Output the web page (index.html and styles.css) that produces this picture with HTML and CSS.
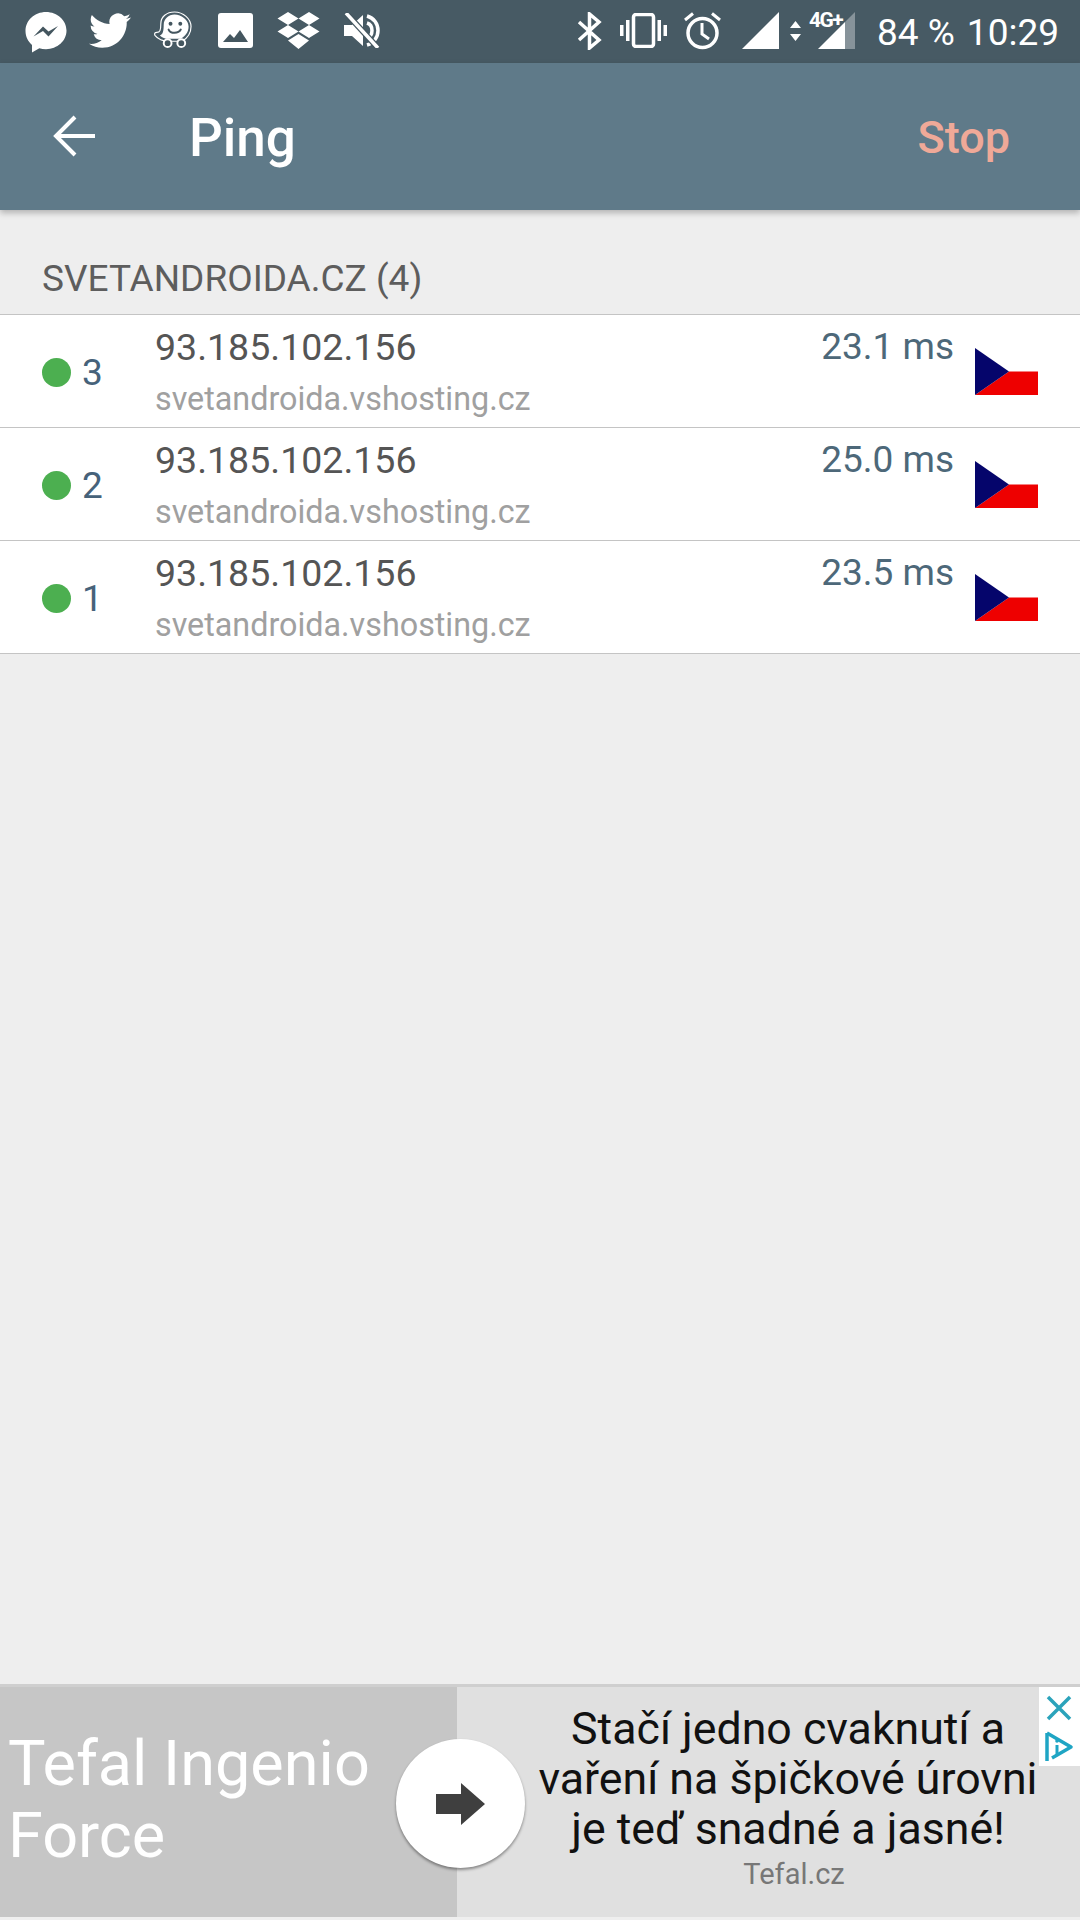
FILE: index.html
```html
<!DOCTYPE html>
<html lang="cs">
<head>
<meta charset="utf-8">
<title>Ping</title>
<link rel="stylesheet" href="styles.css">
</head>
<body>
<div class="page">
  <header class="status">
    <div class="status-left">
      <svg class="ic ic-messenger" viewBox="0 0 42 42"><path fill="#fff" d="M21 1C9.6 1 .5 9.3.5 20c0 5.6 2.5 10.500 6.500 14v7.500l7.300-4.200c2.100.6 4.400.9 6.700.9 11.400 0 20.500-8.300 20.500-18.600S32.400 1 21 1z"/><path fill="#44565f" d="M8.500 25.500 18 15.500l5.500 5 9.500-5.500-9.500 10.500-5.500-5.500z"/></svg>
      <svg class="ic ic-twitter" viewBox="0 0 24 20.500"><path fill="#fff" d="M23.950 2.570a10 10 0 0 1-2.820.78 4.960 4.960 0 0 0 2.160-2.730c-.95.560-2 .96-3.130 1.190A4.920 4.920 0 0 0 11.780 6.290C7.690 6.100 4.070 4.130 1.640 1.160a4.820 4.820 0 0 0-.67 2.480c0 1.710.87 3.210 2.190 4.090a4.900 4.900 0 0 1-2.230-.61v.06a4.920 4.920 0 0 0 3.950 4.820 5 5 0 0 1-2.210.09 4.940 4.940 0 0 0 4.600 3.420 9.870 9.870 0 0 1-6.100 2.100c-.39 0-.78-.02-1.170-.07a14 14 0 0 0 7.560 2.210c9.050 0 14-7.500 14-13.980 0-.21 0-.42-.02-.63A9.940 9.940 0 0 0 24 2.590z"/></svg>
      <svg class="ic ic-waze" viewBox="0 0 42 40"><path fill="none" stroke="#fff" stroke-width="1.200" d="M9 13C9 6 15 1 23 1c9 0 17 7 17 15 0 7-4 12-9 15H17c-5 0-10-1-14-6-1-2 0-3 2-3 3 0 4-2 4-9z"/><path fill="#fff" d="M12 14c0-6 5-10.500 11-10.500 7.500 0 14.500 6 14.500 12.500 0 6-3.500 10-8 12.500H17c-3.500 0-6.500-1-9-3.500 3-1 4-4 4-11.500z"/><circle cx="19" cy="13" r="2" fill="#44565f"/><circle cx="29" cy="13" r="2" fill="#44565f"/><path fill="none" stroke="#44565f" stroke-width="2" stroke-linecap="round" d="M17 19c2 4.500 10 4.500 12.500 0"/><circle cx="16" cy="33" r="4" fill="#44565f" stroke="#fff" stroke-width="2"/><circle cx="30" cy="33" r="4" fill="#44565f" stroke="#fff" stroke-width="2"/></svg>
      <svg class="ic ic-image" viewBox="0 0 35 35"><rect width="35" height="35" rx="3" fill="#fff"/><path fill="#44565f" d="M5 29l7-8 4 4 6-8 8 12z"/></svg>
      <svg class="ic ic-dropbox" viewBox="0 0 43 37"><path fill="#fff" d="M11 0l10.500 6.500L11 13 .5 6.500zM32 0l10.500 6.500L32 13 21.500 6.500zM11 13l10.500 6.500L11 26 .5 19.500zM32 13l10.500 6.500L32 26l-10.500-6.500zM21.500 22L32 28.500 21.500 37 11 28.500z"/></svg>
      <svg class="ic ic-mute" viewBox="0 0 36 35"><path fill="#fff" d="M0 12h8l11-10v31L8 23H0z"/><path fill="none" stroke="#fff" stroke-width="3.500" d="M23 3c7 2 11 8 11 14.500S30 30 23 32M23 10c3 1 5 4 5 7.500s-2 6.500-5 7.500"/><path stroke="#44565f" stroke-width="6" d="M2 0l32 35"/><path stroke="#fff" stroke-width="3.500" d="M2 0l32 35"/></svg>
    </div>
    <div class="status-right">
      <svg class="ic ic-bt" viewBox="0 0 25 38"><path fill="none" stroke="#fff" stroke-width="3.500" d="M2 10l20 18-9.500 8V2L22 10 2 28"/></svg>
      <svg class="ic ic-vibrate" viewBox="0 0 47 35"><rect x="13.500" y="1.500" width="20" height="32" rx="2.500" fill="none" stroke="#fff" stroke-width="3.500"/><path fill="#fff" d="M0 12h3.500v11H0zM6 7h3.500v21H6zM37.500 7H41v21h-3.500zM43.500 12H47v11h-3.500z"/></svg>
      <svg class="ic ic-alarm" viewBox="0 0 37 38"><circle cx="18.500" cy="21" r="14.500" fill="none" stroke="#fff" stroke-width="3.500"/><path fill="none" stroke="#fff" stroke-width="3" d="M18 11v11l7 5M1 8l8-6.500M36 8l-8-6.500"/></svg>
      <svg class="ic ic-signal" viewBox="0 0 37 37"><path fill="#fff" d="M37 0v37H0z"/></svg>
      <svg class="ic ic-updown" viewBox="0 0 11 20"><path fill="#fff" d="M5.500 0L11 7H0zM0 13h11l-5.500 7z"/></svg>
      <div class="net">
        <svg class="ic ic-signal2" viewBox="0 0 37 37"><path fill="#fff" d="M27 10v27H0z"/><path fill="#fff" opacity=".35" d="M37 0v37H27V10z"/></svg>
        <span class="net-label">4G+</span>
      </div>
      <span class="battery">84 %</span>
      <span class="clock">10:29</span>
    </div>
  </header>

  <div class="appbar">
    <svg class="back" viewBox="0 0 42 42"><path fill="none" stroke="#fff" stroke-width="4" d="M42 21H3M22 2 3 21l19 19"/></svg>
    <h1 class="title">Ping</h1>
    <span class="stop">Stop</span>
  </div>

  <main class="content">
    <h2 class="section">SVETANDROIDA.CZ (4)</h2>
    <ul class="rows">
      <li class="row">
        <span class="dot"></span><span class="seq">3</span>
        <div class="info"><div class="ip">93.185.102.156</div><div class="host">svetandroida.vshosting.cz</div></div>
        <span class="ms">23.1 ms</span>
        <svg class="flag" viewBox="0 0 63 47"><path fill="#fff" d="M0 0h63v23.500H31z"/><path fill="#ee0000" d="M0 47 34 23.500h29V47z"/><path fill="#05056b" d="M0 0l34 23.500L0 47z"/></svg>
      </li>
      <li class="row">
        <span class="dot"></span><span class="seq">2</span>
        <div class="info"><div class="ip">93.185.102.156</div><div class="host">svetandroida.vshosting.cz</div></div>
        <span class="ms">25.0 ms</span>
        <svg class="flag" viewBox="0 0 63 47"><path fill="#fff" d="M0 0h63v23.500H31z"/><path fill="#ee0000" d="M0 47 34 23.500h29V47z"/><path fill="#05056b" d="M0 0l34 23.500L0 47z"/></svg>
      </li>
      <li class="row">
        <span class="dot"></span><span class="seq">1</span>
        <div class="info"><div class="ip">93.185.102.156</div><div class="host">svetandroida.vshosting.cz</div></div>
        <span class="ms">23.5 ms</span>
        <svg class="flag" viewBox="0 0 63 47"><path fill="#fff" d="M0 0h63v23.500H31z"/><path fill="#ee0000" d="M0 47 34 23.500h29V47z"/><path fill="#05056b" d="M0 0l34 23.500L0 47z"/></svg>
      </li>
    </ul>
  </main>

  <aside class="ad">
    <div class="ad-left">Tefal Ingenio<br>Force</div>
    <div class="ad-right">
      <div class="ad-headline">Stačí jedno cvaknutí a<br>vaření na špičkové úrovni<br>je teď snadné a jasné!</div>
      <div class="ad-source">Tefal.cz</div>
    </div>
    <div class="ad-go">
      <svg class="ad-arrow" viewBox="0 0 49 42"><path fill="#3f3f3f" d="M0 11h25V0l24 21-24 21V31H0z"/></svg>
    </div>
    <div class="ad-choices">
      <svg class="ad-x" viewBox="0 0 26 26"><path fill="none" stroke="#2ba3bb" stroke-width="3.500" d="M2 2l22 22M24 2 2 24"/></svg>
      <svg class="ad-i" viewBox="0 0 30 32"><path fill="none" stroke="#1fa5c4" stroke-width="3.500" stroke-linejoin="round" d="M3 2l24 14L8 27"/><path fill="none" stroke="#1fa5c4" stroke-width="3.500" d="M3 2v28"/><path fill="none" stroke="#1fa5c4" stroke-width="3" d="M13 14v10"/><circle cx="13" cy="10" r="1.800" fill="#1fa5c4"/></svg>
    </div>
  </aside>
</div>
</body>
</html>
```
FILE: styles.css
```css
* { box-sizing: border-box; }
html, body { margin: 0; padding: 0; }
body { font-family: Roboto, "Noto Sans", sans-serif; background: #eeeeee; }
.page { width: 1080px; height: 1920px; display: flex; flex-direction: column; overflow: hidden; }

.status { height: 63px; background: #475a64; display: flex; align-items: center; justify-content: space-between; padding: 0 21px 2px 25px; color: #fff; flex: none; }
.status-left, .status-right { display: flex; align-items: center; }
.ic { display: block; flex: none; }
.ic-messenger { width: 42px; height: 42px; margin-top: 2px; }
.ic-twitter { width: 42px; height: 36px; margin-left: 22px; }
.ic-waze { width: 41px; height: 39px; margin-left: 21px; }
.ic-image { width: 35px; height: 35px; margin-left: 25px; }
.ic-dropbox { width: 43px; height: 37px; margin-left: 24px; }
.ic-mute { width: 36px; height: 35px; margin-left: 24px; }
.ic-bt { width: 25px; height: 38px; }
.ic-vibrate { width: 47px; height: 35px; margin-left: 18px; }
.ic-alarm { width: 37px; height: 38px; margin-left: 17px; }
.ic-signal { width: 37px; height: 37px; margin-left: 21px; }
.ic-updown { width: 11px; height: 20px; margin-left: 11px; }
.net { position: relative; width: 37px; height: 37px; margin-left: 17px; }
.ic-signal2 { width: 37px; height: 37px; }
.net-label { position: absolute; left: -9px; top: -1px; font-size: 21px; line-height: 19px; font-weight: 700; letter-spacing: -1.5px; }
.battery { font-size: 37px; margin: 3px 0 0 22px; }
.clock { font-size: 37px; margin: 3px 0 0 12px; }

.appbar { position: relative; height: 147px; background: #5f7a89; display: flex; align-items: center; padding: 0 70px 0 53px; color: #fff; box-shadow: 0 3px 6px rgba(0,0,0,.25); flex: none; z-index: 1; }
.back { width: 42px; height: 42px; margin-top: -2px; }
.title { margin: 3px 0 0 94px; font-size: 53px; font-weight: 500; flex: 1; }
.stop { font-size: 45px; font-weight: 500; margin-top: 2px; color: #efa998; }

.content { flex: 1; min-height: 0; }
.section { margin: 0; height: 105px; padding: 45px 0 0 42px; font-size: 37px; line-height: 48px; font-weight: 400; color: #5d5d5d; border-bottom: 1px solid #c4c4c4; }
.rows { list-style: none; margin: 0; padding: 0; background: #fff; }
.row { height: 113px; display: flex; align-items: center; padding: 0 42px; border-bottom: 1px solid #c4c4c4; }
.dot { width: 29px; height: 29px; margin-top: 3px; border-radius: 50%; background: #4caf50; flex: none; }
.seq { width: 84px; margin-top: 3px; padding-left: 11px; font-size: 37px; color: #46627a; flex: none; }
.info { flex: 1; margin-top: 3px; }
.ip { font-size: 37.500px; line-height: 50px; color: #555; }
.host { font-size: 32.300px; line-height: 50px; margin-top: 2px; color: #a0a0a0; }
.ms { align-self: flex-start; font-size: 37px; line-height: 50px; margin-top: 7px; color: #4d6879; }
.flag { width: 63px; height: 47px; margin-left: 21px; flex: none; }

.ad { position: relative; height: 236px; display: flex; border-top: 3px solid #cfcfcf; border-bottom: 3px solid #efefef; flex: none; }
.ad-left { width: 457px; background: #c6c6c6; color: #fff; padding: 41px 0 0 8px; font-size: 63px; line-height: 72px; }
.ad-right { flex: 1; background: #e0e0e0; padding-top: 17px; padding-left: 41px; padding-right: 2px; text-align: center; }
.ad-headline { font-size: 44.700px; line-height: 50px; color: #111; }
.ad-source { font-size: 29px; line-height: 38px; color: #777; margin: 1px 0 0 12px; }
.ad-go { position: absolute; left: 396px; top: 52px; width: 129px; height: 129px; border-radius: 50%; background: #fff; box-shadow: 0 2px 3px rgba(0,0,0,.4); display: flex; align-items: center; justify-content: center; }
.ad-arrow { width: 49px; height: 42px; }
.ad-choices { position: absolute; right: 0; top: 0; width: 41px; height: 79px; background: #fff; display: flex; flex-direction: column; align-items: center; padding: 8px 2px 0 0; gap: 10px; }
.ad-x { width: 26px; height: 26px; }
.ad-i { width: 30px; height: 32px; }
```
